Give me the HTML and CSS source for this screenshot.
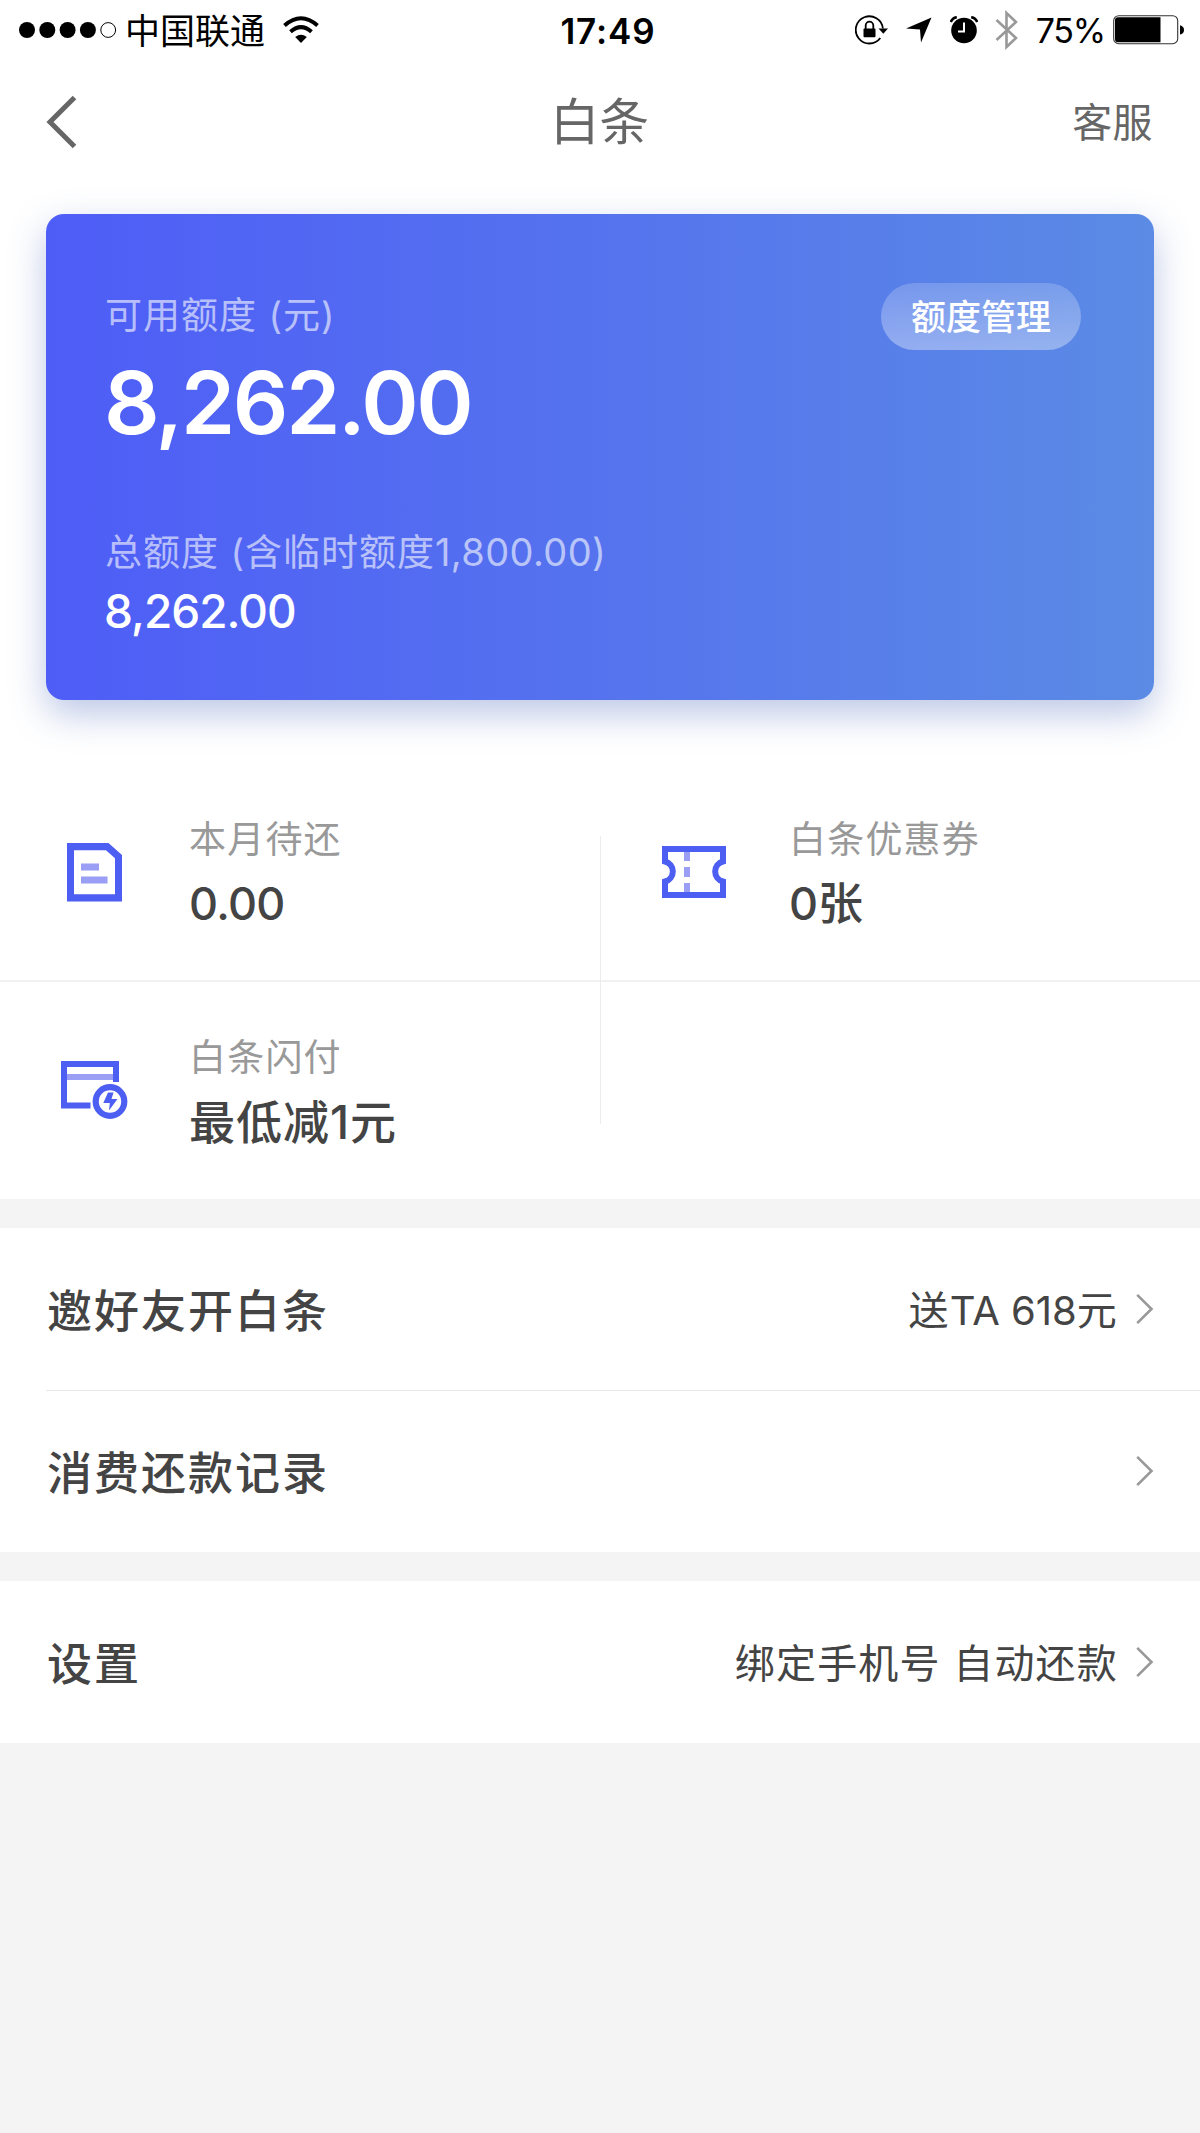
FILE: index.html
```html
<!DOCTYPE html>
<html lang="zh-CN">
<head>
<meta charset="utf-8">
<title>白条</title>
<link rel="stylesheet" href="styles.css">
</head>
<body>
<div class="top">
<div class="status">
  <div class="status-left">
    <svg width="98" height="18" viewBox="0 0 98 18"><circle cx="9" cy="9" r="8"/><circle cx="29.3" cy="9" r="8"/><circle cx="49.6" cy="9" r="8"/><circle cx="69.9" cy="9" r="8"/><circle cx="90.2" cy="9" r="7.4" fill="#fff" stroke="#000" stroke-width="1"/></svg>
    <span class="carrier">中国联通</span>
    <svg class="wifi" width="36" height="28" viewBox="0 0 36 28"><g fill="none" stroke="#000"><path d="M1.500 9.500Q18-5 34.500 9.500" stroke-width="4"/><path d="M7.500 15.800Q18 6.500 28.500 15.800" stroke-width="4"/></g><path d="M18 27l-5.800-6q5.800-4.500 11.600 0z"/></svg>
  </div>
  <span class="time">17:49</span>
  <div class="status-right">
    <svg width="34" height="30" viewBox="0 0 34 30"><path d="M27.900 13.500A13.600 13.600 0 1 0 25.300 23" fill="none" stroke="#000" stroke-width="1.800"/><path d="M23.500 13.500h9.500l-4.700 5.200z"/><rect x="8.500" y="13.500" width="12" height="8.700" rx="1"/><path d="M10.700 14V10.500a3.800 3.800 0 0 1 7.600 0V14" fill="none" stroke="#000" stroke-width="1.800"/></svg>
    <svg class="loc" width="26" height="26" viewBox="0 0 26 26"><path d="M25.500.5L15 25.500 14 12.500 0 11.500z"/></svg>
    <svg class="alarm" width="28" height="28" viewBox="0 0 28 28"><circle cx="14" cy="14.500" r="12.800"/><path d="M.8 6Q2.500 1.800 6.800 1.200M27.200 6Q25.500 1.800 21.200 1.200" fill="none" stroke="#000" stroke-width="2.600"/><path d="M14 6.500v9H8" fill="none" stroke="#fff" stroke-width="2"/></svg>
    <svg class="bt" width="24" height="40" viewBox="0 0 24 40"><path d="M1.500 10L21 28 11.500 37V3L21 12 1.500 30" fill="none" stroke="#999" stroke-width="2.600"/></svg>
    <span class="percent">75%</span>
    <svg class="battery" width="71" height="30" viewBox="0 0 71 30"><rect x=".7" y=".7" width="64" height="28" rx="5" fill="#fff" stroke="#333" stroke-width="1.100"/><path d="M5 2.200h42.500v25H5a3 3 0 0 1-3-3V5.200a3 3 0 0 1 3-3z"/><path d="M67 10.200q4 1 4 4.700t-4 4.700z"/></svg>
  </div>
</div>
<div class="nav">
  <svg class="back" width="32" height="54" viewBox="0 0 32 54"><path d="M28.500 2.500L4 27 28.500 51.500" fill="none" stroke="#666" stroke-width="5"/></svg>
  <span class="title">白条</span>
  <span class="service">客服</span>
</div>
<div class="card">
  <div class="card-main">
    <div class="cap">可用额度 (元)</div>
    <div class="amount">8,262.00</div>
    <div class="cap total">总额度 (含临时额度<span class="num">1,800.00)</span></div>
    <div class="sub">8,262.00</div>
  </div>
  <div class="manage">额度管理</div>
</div>
<div class="grid">
  <div class="cell">
    <svg class="icon" width="96" height="80" viewBox="0 0 96 80"><path fill="#4d5ef2" fill-rule="evenodd" d="M23 11h41.500L78 23v46.500H23zM30 18.300v44h41V26.300L62 18.300z"/><path fill="#9a9ef5" d="M37 31.500h18v7H37zM37 44.500h26.500v7H37z"/></svg>
    <div><div class="label">本月待还</div><div class="value figures">0.00</div></div>
  </div>
  <div class="cell">
    <svg class="icon" width="96" height="80" viewBox="0 0 96 80"><path fill="none" stroke="#4d5ef2" stroke-width="6" d="M21 17H79V29.500A10.300 10.300 0 0 0 79 49.500V63H21V49.500A10.300 10.300 0 0 0 21 29.500z"/><path fill="#9a9ef5" d="M40 20h6v9h-6zM40 35h6v10h-6zM40 51h6v9h-6z"/></svg>
    <div><div class="label">白条优惠券</div><div class="value">0张</div></div>
  </div>
  <div class="cell">
    <svg class="icon" width="96" height="80" viewBox="0 0 96 80"><path fill="#9a9ef5" d="M22 24h48v6H22z"/><path fill="none" stroke="#4d5ef2" stroke-width="6" d="M46.500 55.500H20V14H72V32"/><circle cx="66" cy="51.500" r="14.300" fill="#fff" stroke="#4d5ef2" stroke-width="6.200"/><path fill="#4d5ef2" d="M64 42.500h5.500l-2 6.500h6L65 60.500l.8-7.500h-6.500z"/></svg>
    <div><div class="label">白条闪付</div><div class="value offer">最低减1元</div></div>
  </div>
  <div class="cell"></div>
</div>
</div>
<div class="list">
  <div class="row"><span class="name">邀好友开白条</span><span class="info">送<span class="latin">TA 618</span>元</span><svg class="go" width="18" height="32" viewBox="0 0 18 32"><path d="M1.200 1.800L15.500 16 1.200 30.200" fill="none" stroke="#999" stroke-width="2.600"/></svg></div>
  <div class="row line"><span class="name">消费还款记录</span><svg class="go" width="18" height="32" viewBox="0 0 18 32"><path d="M1.200 1.800L15.500 16 1.200 30.200" fill="none" stroke="#999" stroke-width="2.600"/></svg></div>
</div>
<div class="list">
  <div class="row"><span class="name">设置</span><span class="info">绑定手机号 自动还款</span><svg class="go" width="18" height="32" viewBox="0 0 18 32"><path d="M1.200 1.800L15.500 16 1.200 30.200" fill="none" stroke="#999" stroke-width="2.600"/></svg></div>
</div>
</body>
</html>
```
FILE: styles.css
```css
* { box-sizing: border-box; }
body {
  margin: 0;
  width: 1200px;
  min-height: 2133px;
  background: #f4f4f4;
  color: #444;
  font-family: Inter, "Noto Sans CJK SC", sans-serif;
  white-space: nowrap;
}
svg { display: block; flex: none; }
.top { background: #fff; }

.status {
  display: grid;
  grid-template-columns: 1fr auto 1fr;
  align-items: center;
  height: 60px;
  padding: 0 16px 0 18px;
  color: #000;
}
.status-left, .status-right { display: flex; align-items: center; }
.status-right { justify-content: flex-end; }
.carrier { margin-left: 9px; padding-top: 1px; font-size: 35px; line-height: 50px; letter-spacing: 0; }
.wifi { margin-left: 18px; }
.time { padding: 1px 0 0 14px; font-size: 35px; font-weight: 600; line-height: 50px; letter-spacing: 0.9px; }
.loc { margin-left: 17px; }
.alarm { margin-left: 18px; }
.bt { margin-left: 17px; }
.percent { margin-left: 17px; padding-top: 2px; font-size: 34px; line-height: 50px; letter-spacing: -1.2px; }
.battery { margin-left: 8px; }

.nav {
  display: grid;
  grid-template-columns: 1fr auto 1fr;
  align-items: center;
  height: 124px;
  padding: 0 47px 0 46px;
  color: #666;
}
.title { padding-top: 0; font-size: 49.5px; line-height: 70px; }
.service { justify-self: end; padding-top: 2px; font-size: 40px; letter-spacing: 0.4px; line-height: 60px; }

.card {
  display: flex;
  justify-content: space-between;
  align-items: flex-start;
  height: 486px;
  margin: 30px 46px 0;
  padding: 69px 73px 0 59px;
  border-radius: 18px;
  background: linear-gradient(90deg, #4e5df7, #5573ee 50%, #5b8be5);
  color: #fff;
  box-shadow: 0 14px 36px rgba(70, 100, 185, 0.36);
}
.card-main { padding-top: 3px; }
.cap { font-size: 37px; line-height: 60px; letter-spacing: 1px; color: rgba(255, 255, 255, 0.6); }
.num { font-size: 38px; letter-spacing: 0.4px; }
.amount { margin: 7px 0 0 -1px; font-size: 87px; font-weight: 600; line-height: 100px; letter-spacing: -2.3px; }
.total { margin-top: 69px; }
.sub { margin: -2px 0 0 -1px; font-size: 46px; font-weight: 500; line-height: 60px; letter-spacing: -1px; }
.manage {
  width: 200px;
  height: 67px;
  border-radius: 34px;
  background: linear-gradient(rgba(255, 255, 255, 0.18), rgba(255, 255, 255, 0.36));
  font-size: 35px;
  font-weight: 500;
  line-height: 68px;
  text-align: center;
}

.grid {
  display: grid;
  grid-template-columns: 1fr 1fr;
  grid-template-rows: 218px 218px;
  padding-top: 63px;
  background:
    linear-gradient(#ececec, #ececec) 600px 136px / 1px 288px no-repeat,
    linear-gradient(#f1f1f1, #f1f1f1) 0 280px / 100% 2px no-repeat;
}
.cell { display: flex; padding: 44px 0 0 44px; }
.cell > div { margin-left: 49px; padding-top: 2px; }
.icon { margin-top: 25px; }
.label { font-size: 37px; line-height: 62px; letter-spacing: 1.2px; color: #999; }
.value { font-size: 45px; font-weight: 500; line-height: 66px; }
.figures { letter-spacing: -0.7px; }
.offer { font-size: 46px; letter-spacing: 1px; }

.list { margin-bottom: 29px; background: #fff; }
.top { margin-bottom: 29px; }
.row { display: flex; align-items: center; height: 162px; padding: 0 46px; }
.line { background: linear-gradient(#e8e8e8, #e8e8e8) 46px 0 / 100% 1px no-repeat; }
.name { margin-right: auto; padding: 6px 0 0 1px; font-size: 45px; font-weight: 500; letter-spacing: 2px; line-height: 70px; }
.info { padding-top: 4px; font-size: 40px; letter-spacing: 1.2px; line-height: 60px; }
.latin { letter-spacing: 0; }
.go { margin-left: 18px; }
```
